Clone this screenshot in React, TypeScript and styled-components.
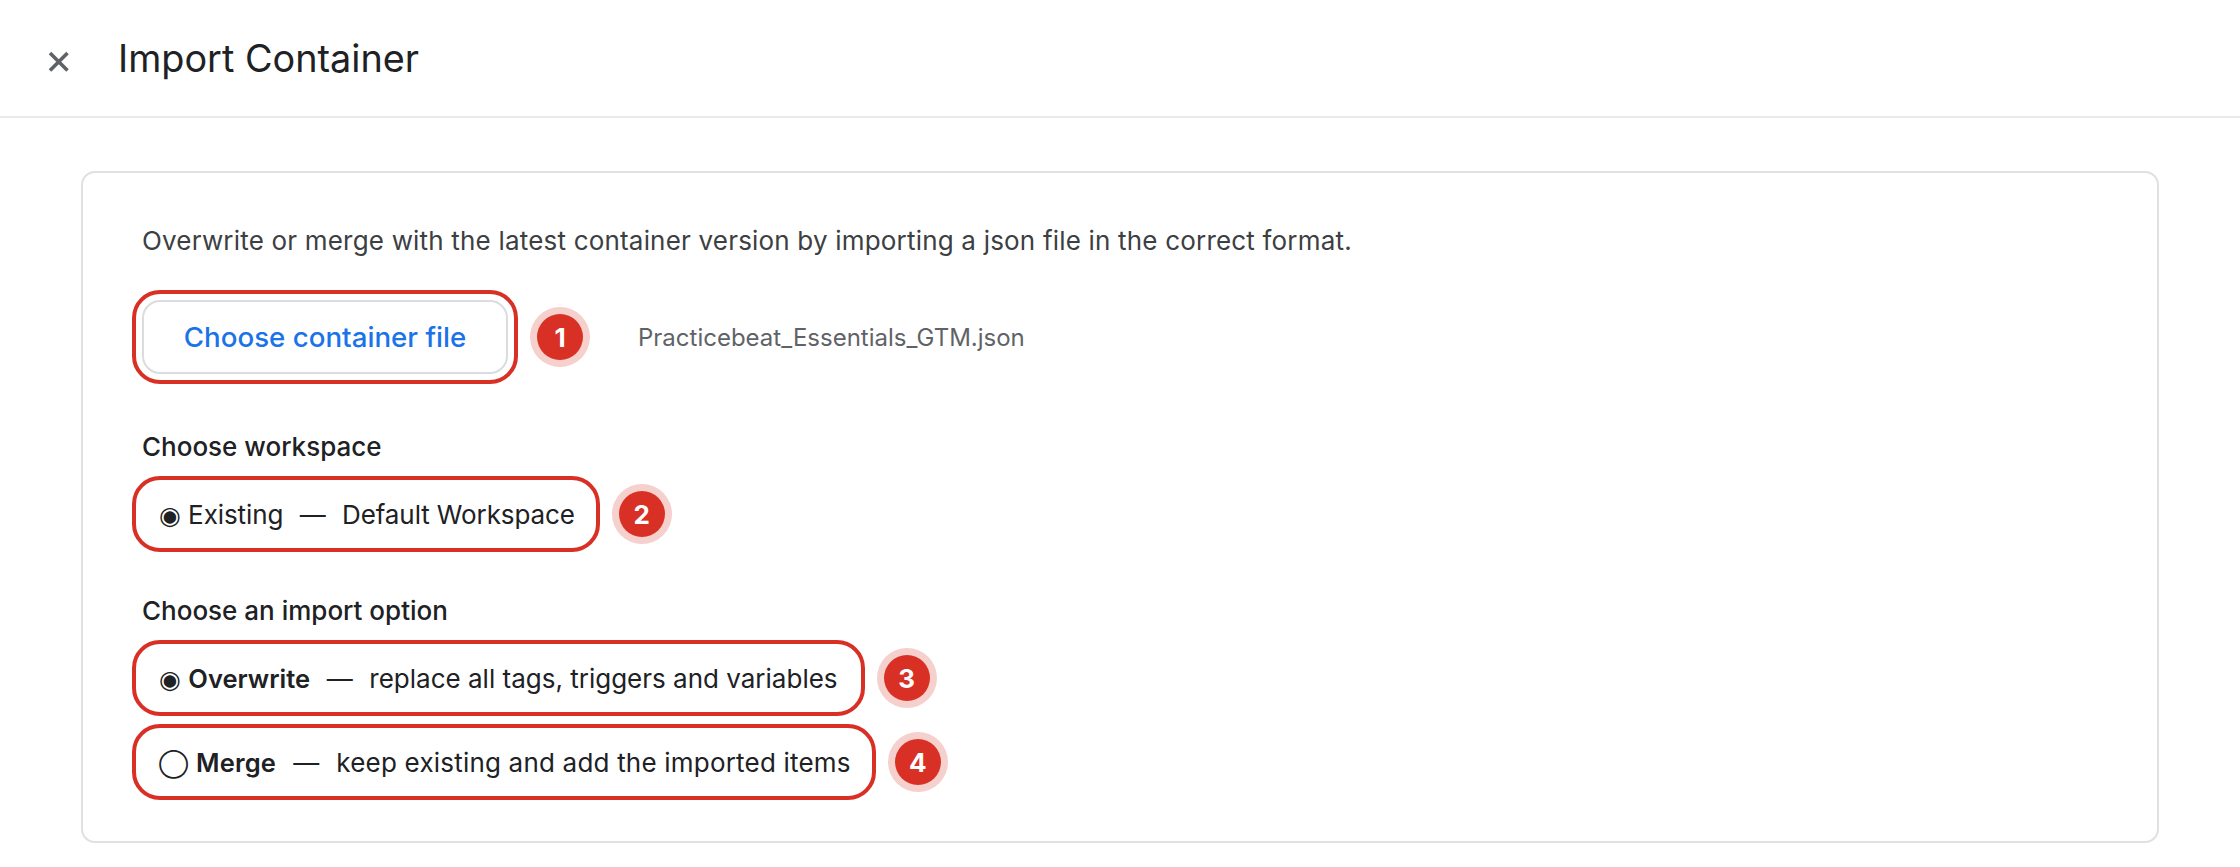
import React from "react";
import styled, { createGlobalStyle } from "styled-components";

const GlobalStyle = createGlobalStyle`
  html, body {
    margin: 0;
    padding: 0;
    background: #fff;
    font-family: Inter, "Liberation Sans", sans-serif;
    color: #202124;
  }
`;

const Page = styled.div`
  width: 2240px;
  height: 867px;
  overflow: hidden;
  background: #fff;
`;

const Header = styled.header`
  height: 116px;
  box-sizing: content-box;
  border-bottom: 2px solid #e8eaed;
  display: flex;
  align-items: center;
  padding-left: 47px;
`;

const CloseButton = styled.button`
  width: 24px;
  height: 24px;
  padding: 0;
  border: 0;
  background: none;
  display: flex;
  margin-right: 47px;
  margin-top: 7px;
`;

const Title = styled.h1`
  margin: 0;
  font-size: 37.8px;
  font-weight: 400;
  color: #202124;
`;

const Card = styled.section`
  box-sizing: border-box;
  width: 2078px;
  height: 672px;
  margin: 53px 0 0 81px;
  border: 2px solid #e0e0e0;
  border-radius: 14px;
  padding: 52px 0 0 59px;
`;

const Intro = styled.p`
  margin: 0 0 33px;
  font-size: 26px;
  letter-spacing: 0.19px;
  line-height: 32px;
  color: #3c4043;
`;

const Row = styled.div<{ $gap?: number }>`
  display: flex;
  align-items: center;
  margin-left: -10px;
  margin-bottom: ${(p) => p.$gap ?? 0}px;
`;

const Ring = styled.div<{ $h: number; $pad: number; $padRight?: number }>`
  box-sizing: border-box;
  height: ${(p) => p.$h}px;
  display: flex;
  align-items: center;
  border: 4px solid #d93025;
  border-radius: 28px;
  padding: 0 ${(p) => p.$padRight ?? p.$pad}px 0 ${(p) => p.$pad}px;
`;

const FileButton = styled.button`
  box-sizing: border-box;
  width: 366px;
  height: 74px;
  border: 2.5px solid #dadce0;
  border-radius: 18px;
  background: #fff;
  color: #1a73e8;
  font: 500 27.7px Inter, "Liberation Sans", sans-serif;
`;

const Badge = styled.span`
  width: 46px;
  height: 46px;
  flex: none;
  margin-left: 19px;
  border-radius: 50%;
  background: #d93025;
  box-shadow: 0 0 0 7px #f5d0cd;
  color: #fff;
  font-size: 26px;
  font-weight: 700;
  display: flex;
  align-items: center;
  justify-content: center;
`;

const FileName = styled.span`
  margin-left: 55px;
  font-size: 24px;
  color: #5f6368;
`;

const Label = styled.div`
  font-size: 26px;
  font-weight: 500;
  line-height: 32px;
  margin-bottom: 13px;
`;

const OptionText = styled.span<{ $track?: number }>`
  font-size: 26px;
  letter-spacing: ${(p) => p.$track ?? 0}px;
  color: #202124;
  white-space: pre;
`;

const Strong = styled.b`
  font-size: 25.5px;
  font-weight: 600;
`;

const Dash = styled.span`
  margin: 0 2px;
`;

// the empty circle is narrower in the picture than the glyph at full text size
const EmptyDot = styled.span`
  font-size: 21px;
`;

const FullDot = styled.span`
  font-size: 25px;
`;

export default function App() {
  return (
    <Page>
      <GlobalStyle />
      <Header>
        <CloseButton aria-label="Close">
          <svg width="24" height="24" viewBox="0 0 24 24">
            <path d="M3 3 L20.5 20.5 M20.5 3 L3 20.5" stroke="#5f6368" strokeWidth="3.6" fill="none" />
          </svg>
        </CloseButton>
        <Title>Import Container</Title>
      </Header>
      <Card>
        <Intro>Overwrite or merge with the latest container version by importing a json file in the correct format.</Intro>
        <Row $gap={47}>
          <Ring $h={94} $pad={6}>
            <FileButton>Choose container file</FileButton>
          </Ring>
          <Badge>1</Badge>
          <FileName>Practicebeat_Essentials_GTM.json</FileName>
        </Row>
        <Label>Choose workspace</Label>
        <Row $gap={43}>
          <Ring $h={76} $pad={23} $padRight={21}>
            <OptionText $track={-0.1}><FullDot>◉</FullDot> Existing  <Dash>—</Dash>  Default Workspace</OptionText>
          </Ring>
          <Badge>2</Badge>
        </Row>
        <Label>Choose an import option</Label>
        <Row $gap={8}>
          <Ring $h={76} $pad={23}>
            <OptionText><FullDot>◉</FullDot> <Strong>Overwrite</Strong>  <Dash>—</Dash>  replace all tags, triggers and variables</OptionText>
          </Ring>
          <Badge>3</Badge>
        </Row>
        <Row>
          <Ring $h={76} $pad={23} $padRight={21}>
            <OptionText $track={0.2}><EmptyDot>◯</EmptyDot> <Strong>Merge</Strong>  <Dash>—</Dash>  keep existing and add the imported items</OptionText>
          </Ring>
          <Badge>4</Badge>
        </Row>
      </Card>
    </Page>
  );
}
